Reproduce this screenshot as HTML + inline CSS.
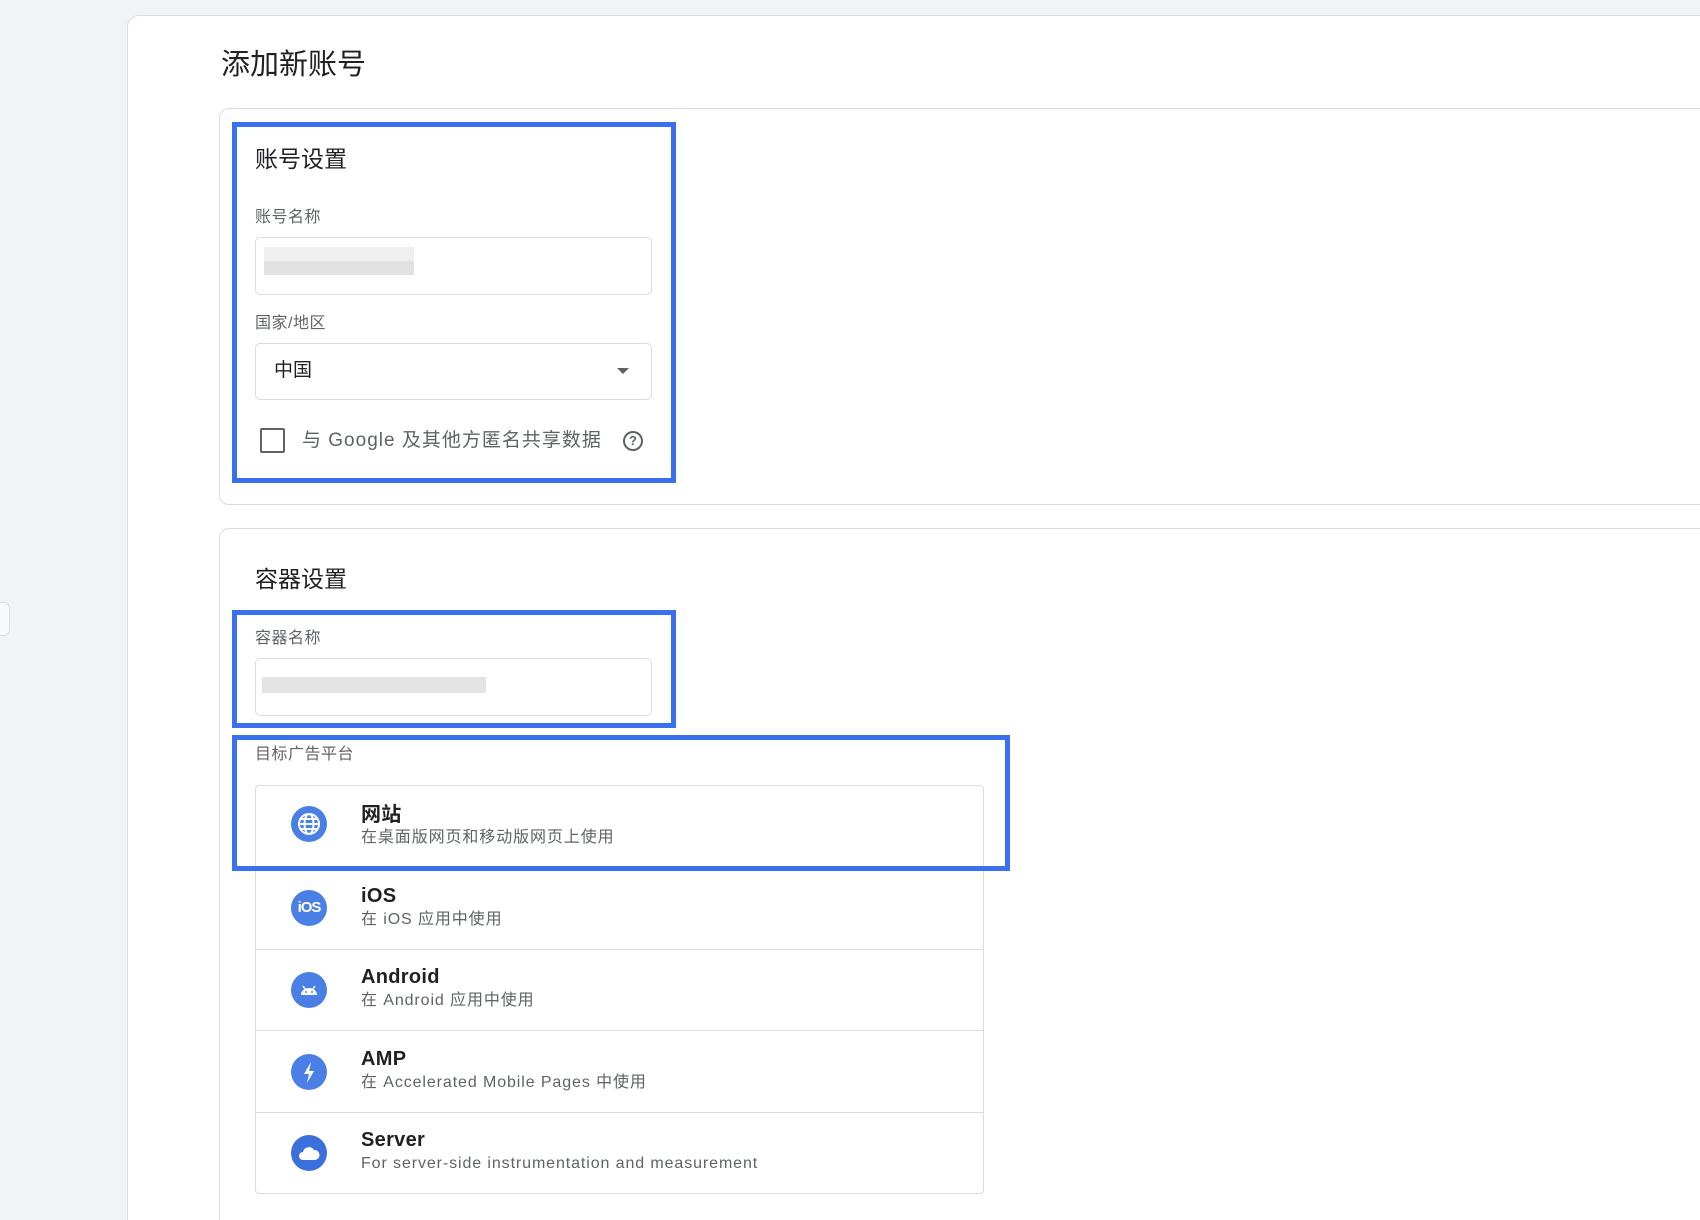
<!DOCTYPE html>
<html><head><meta charset="utf-8"><style>
*{margin:0;padding:0;box-sizing:border-box}
html,body{width:1700px;height:1220px;overflow:hidden}
body{background:#f1f3f4;position:relative;font-family:"Liberation Sans","Noto Sans CJK SC",sans-serif;color:#202124}
.a{position:absolute}
.card{position:absolute;background:#fff;border:1.5px solid #dadce0;border-radius:12px}
.blue{position:absolute;border:5px solid #3a6ff0}
.lbl{position:absolute;font-size:16px;color:#5f6368;line-height:20px;letter-spacing:0.5px}
.inp{position:absolute;border:1.5px solid #dadce0;border-radius:5px;background:#fff}
.row{position:absolute;left:255px;width:729px;border-top:1.5px solid #dadce0}
.ic{position:absolute;left:291px;width:36px;height:36px;border-radius:50%;background:#4a7fe6}
.t{position:absolute;left:361px;font-size:20px;font-weight:bold;color:#202124;line-height:24px;letter-spacing:0.3px}
.s{position:absolute;left:361px;font-size:16px;color:#5f6368;line-height:20px;letter-spacing:0.9px}
.pix{position:absolute;background:#e4e4e4}
</style></head><body>
<div class="a" style="left:-6px;top:602px;width:16px;height:34px;border:1.5px solid #dadce0;border-radius:6px;background:#f8f9fa"></div>
<div class="card" style="left:127px;top:15px;width:1620px;height:1240px"></div>
<div class="a" style="left:221px;top:47px;font-size:29px;line-height:36px">添加新账号</div>

<div class="card" style="left:219px;top:108px;width:1520px;height:397px;border-radius:10px"></div>
<div class="card" style="left:219px;top:528px;width:1520px;height:740px;border-radius:10px"></div>

<div class="a" style="left:255px;top:145px;font-size:23px;line-height:28px">账号设置</div>
<div class="lbl" style="left:255px;top:208px">账号名称</div>
<div class="inp" style="left:255px;top:237px;width:397px;height:58px"></div>
<div class="pix" style="left:264px;top:247px;width:150px;height:14px;background:#efefef"></div>
<div class="pix" style="left:264px;top:261px;width:150px;height:14px;background:#e2e2e2"></div>
<div class="lbl" style="left:255px;top:314px">国家/地区</div>
<div class="inp" style="left:255px;top:343px;width:397px;height:57px"></div>
<div class="a" style="left:274px;top:359px;font-size:19px;line-height:24px">中国</div>
<div class="a" style="left:617px;top:368px;width:0;height:0;border-left:6px solid transparent;border-right:6px solid transparent;border-top:6px solid #5f6368"></div>
<div class="a" style="left:260px;top:428px;width:25px;height:25px;border:2px solid #5f6368;border-radius:2px"></div>
<div class="a" style="left:302px;top:429px;font-size:19px;color:#5f6368;line-height:24px;letter-spacing:1px">与 Google 及其他方匿名共享数据</div>
<div class="a" style="left:623px;top:431px;width:20px;height:20px;border:2px solid #5f6368;border-radius:50%;font-size:13px;font-weight:bold;color:#5f6368;text-align:center;line-height:16px">?</div>

<div class="a" style="left:255px;top:565px;font-size:23px;line-height:28px">容器设置</div>
<div class="lbl" style="left:255px;top:629px">容器名称</div>
<div class="inp" style="left:255px;top:658px;width:397px;height:58px"></div>
<div class="pix" style="left:262px;top:677px;width:224px;height:16px"></div>
<div class="lbl" style="left:255px;top:745px">目标广告平台</div>

<div class="a" style="left:255px;top:785px;width:729px;height:409px;border:1.5px solid #dadce0;border-radius:4px"></div>
<div class="row" style="top:949px"></div>
<div class="row" style="top:1030px"></div>
<div class="row" style="top:1112px"></div>

<div class="ic" style="top:806px"><svg width="36" height="36" viewBox="0 0 36 36" fill="none" stroke="#fff" stroke-width="2"><circle cx="18" cy="18" r="10"/><ellipse cx="18" cy="18" rx="4.5" ry="10"/><path d="M8 18h20M10 13h16M10 23h16"/></svg></div>
<div class="t" style="top:803px">网站</div><div class="s" style="top:828px">在桌面版网页和移动版网页上使用</div>

<div class="ic" style="top:890px;color:#fff;font-size:15px;font-weight:bold;text-align:center;line-height:36px;letter-spacing:-1px">iOS</div>
<div class="t" style="top:884px">iOS</div><div class="s" style="top:910px">在 iOS 应用中使用</div>

<div class="ic" style="top:972px"><svg width="36" height="36" viewBox="0 0 36 36"><path d="M10 23a8 7 0 0 1 16 0z" fill="#fff"/><path d="M12 14l2 3M24 14l-2 3" stroke="#fff" stroke-width="1.5"/><circle cx="15" cy="20" r="1" fill="#4a7fe6"/><circle cx="21" cy="20" r="1" fill="#4a7fe6"/></svg></div>
<div class="t" style="top:965px">Android</div><div class="s" style="top:991px">在 Android 应用中使用</div>

<div class="ic" style="top:1054px"><svg width="36" height="36" viewBox="0 0 36 36"><path d="M20 8l-7 12h5l-2 9 7-12h-5z" fill="#fff"/></svg></div>
<div class="t" style="top:1047px">AMP</div><div class="s" style="top:1073px">在 Accelerated Mobile Pages 中使用</div>

<div class="ic" style="top:1135px;background:#3b6fdc"><svg width="36" height="36" viewBox="0 0 36 36"><path d="M12 25a4 4 0 0 1 0-8 6 6 0 0 1 11-2 5 5 0 0 1 1 10z" fill="#fff"/></svg></div>
<div class="t" style="top:1128px">Server</div><div class="s" style="top:1154px">For server-side instrumentation and measurement</div>

<div class="blue" style="left:232px;top:122px;width:444px;height:361px"></div>
<div class="blue" style="left:232px;top:610px;width:444px;height:118px"></div>
<div class="blue" style="left:232px;top:735px;width:778px;height:136px"></div>
</body></html>
